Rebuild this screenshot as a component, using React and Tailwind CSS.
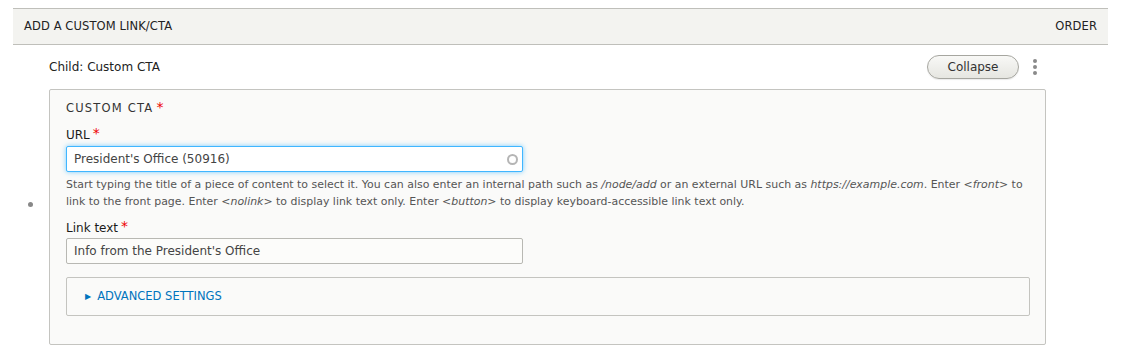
import React from "react";

const font = { fontFamily: '"DejaVu Sans", "Lucida Grande", Verdana, sans-serif' };

function Req() {
  return <span className="text-[#e00] ml-[3px] text-[14px] leading-none relative top-[-2px]">*</span>;
}

export default function App() {
  return (
    <div className="w-[1122px] h-[357px] bg-white text-[#333]" style={font}>
      <div className="pt-[8px] pl-[13px] pr-[14px]">
        <div className="h-[37px] bg-[#f3f3f0] border-t border-b border-[#bfbfba] flex items-center justify-between pl-[11px] pr-[11px] text-[11.5px] text-[#222] tracking-[0.1px]">
          <span>ADD A CUSTOM LINK/CTA</span>
          <span>ORDER</span>
        </div>
        <div className="flex">
          <div className="w-[36px] shrink-0 flex items-start justify-center pt-[157px]">
            <div className="w-[5px] h-[5px] rounded-full bg-[#888] ml-[-1px]"></div>
          </div>
          <div className="w-[997px]">
            <div className="h-[44px] flex items-center justify-between">
              <span className="text-[12px] text-[#222]">Child: Custom CTA</span>
              <div className="flex items-center gap-[14px] mr-[9px]">
                <button className="h-[24px] w-[92px] rounded-full border border-[#a6a6a0] bg-gradient-to-b from-[#f8f8f6] to-[#e6e6e1] text-[12px] text-[#333] shadow-[0_1px_1px_rgba(0,0,0,0.08)]" style={font}>
                  Collapse
                </button>
                <div className="flex flex-col gap-[2px] items-center w-[4px]">
                  <div className="w-[4px] h-[4px] rounded-full bg-[#8a8a8a]"></div>
                  <div className="w-[4px] h-[4px] rounded-full bg-[#8a8a8a]"></div>
                  <div className="w-[4px] h-[4px] rounded-full bg-[#8a8a8a]"></div>
                </div>
              </div>
            </div>
            <div className="h-[256px] border border-[#c4c4c0] rounded-[2px] bg-[#fafaf9] pl-[16px] pr-[16px] pt-[10px]">
              <div className="text-[11.5px] tracking-[1.2px] text-[#333] h-[17px] flex items-center">
                CUSTOM CTA<Req />
              </div>
              <div className="mt-[10px] text-[12px] text-[#1a1a1a] h-[15px] flex items-center">
                <span>URL</span><Req />
              </div>
              <div className="mt-[4px] w-[457px] h-[26px] bg-white border border-[#40b6ff] rounded-[2px] shadow-[0_0_5px_rgba(64,182,255,0.7)] flex items-center pl-[7px] pr-[4px] text-[12px] text-[#444]">
                <span className="flex-1">President's Office (50916)</span>
                <div className="w-[11px] h-[11px] rounded-full border-2 border-[#b5b5b5]"></div>
              </div>
              <div className="mt-[4px] text-[10.95px] leading-[17px] text-[#555] w-[963px]">
                Start typing the title of a piece of content to select it. You can also enter an internal path such as <em>/node/add</em> or an external URL such as <em>https://example.com</em>. Enter <em>&lt;front&gt;</em> to link to the front page. Enter <em>&lt;nolink&gt;</em> to display link text only. Enter <em>&lt;button&gt;</em> to display keyboard-accessible link text only.
              </div>
              <div className="mt-[10px] text-[12px] text-[#1a1a1a] h-[15px] flex items-center">
                <span>Link text</span><Req />
              </div>
              <div className="mt-[3px] w-[457px] h-[26px] bg-[#fcfcfa] border border-[#b8b8b3] rounded-[2px] flex items-center pl-[7px] text-[12px] text-[#444]">
                Info from the President's Office
              </div>
              <div className="mt-[13px] w-[964px] h-[39px] border border-[#c4c4c0] rounded-[2px] bg-[#fafaf9] flex items-center pl-[18px] text-[11.5px] text-[#0074bd]">
                <span className="text-[8px] mr-[6px]">▶</span>
                <span>ADVANCED SETTINGS</span>
              </div>
            </div>
          </div>
        </div>
      </div>
    </div>
  );
}
